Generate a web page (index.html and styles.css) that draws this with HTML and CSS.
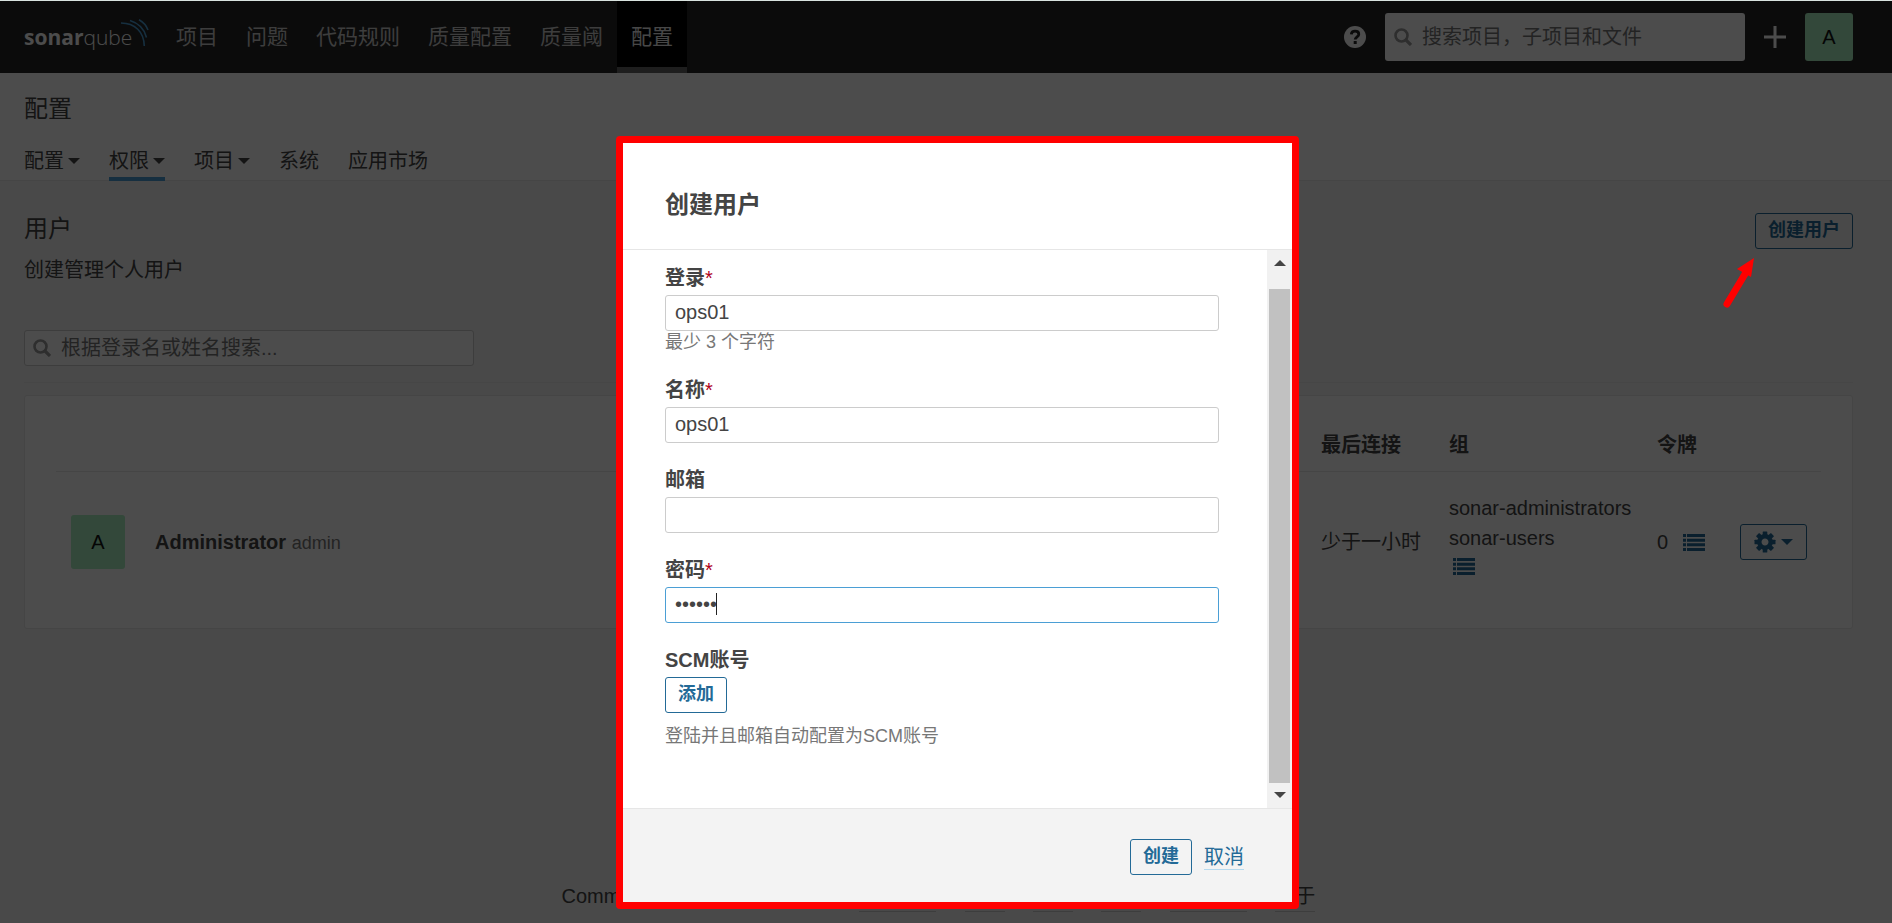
FILE: index.html
```html
<!DOCTYPE html>
<html lang="zh-CN">
<head>
<meta charset="utf-8">
<title>SonarQube - 用户</title>
<link rel="stylesheet" href="styles.css">
</head>
<body>
<div class="page">
  <header class="navbar">
    <a class="logo" href="#" aria-label="sonarqube">
      <span class="logo-bold">sonar</span><span class="logo-light">qube</span>
      <svg class="logo-waves" width="29" height="28" viewBox="0 0 29 28" fill="none" stroke="#4b9fd5" stroke-width="1.6"><path d="M1 4C15 4 24 13 24.300 27"/><path d="M10 1.500C18 4 24.500 10 26.500 18.500"/><path d="M19 .800C23 3 26.500 7 28 11"/></svg>
    </a>
    <nav class="main-nav">
      <a href="#">项目</a>
      <a href="#">问题</a>
      <a href="#">代码规则</a>
      <a href="#">质量配置</a>
      <a href="#">质量阈</a>
      <a href="#" class="active">配置</a>
    </nav>
    <div class="nav-tools">
      <a href="#" class="help" aria-label="帮助">
        <svg width="22" height="22" viewBox="0 0 22 22"><circle cx="11" cy="11" r="11" fill="#fff"/><path d="M7.300 8.400C7.500 6.200 9 5.200 11.100 5.200C13.300 5.200 14.800 6.400 14.800 8.200C14.800 10.800 11.200 10.800 11.200 13.600" fill="none" stroke="#262626" stroke-width="2.800"/><rect x="9.700" y="15" width="3" height="3" fill="#262626"/></svg>
      </a>
      <label class="search search-global">
        <svg class="search-icon" width="18" height="18" viewBox="0 0 18 18" fill="none" stroke="#999" stroke-width="2.600"><circle cx="7.500" cy="7.500" r="6"/><path d="M12 12l5 5" stroke-width="3.200"/></svg>
        <input type="search" placeholder="搜索项目，子项目和文件" aria-label="搜索项目，子项目和文件">
      </label>
      <button class="plus" aria-label="新建">
        <svg width="22" height="22" viewBox="0 0 22 22" stroke="#fff" stroke-width="3"><path d="M11 0v22M0 11h22"/></svg>
      </button>
      <a href="#" class="avatar avatar-nav">A</a>
    </div>
  </header>

  <section class="context">
    <h1>配置</h1>
    <nav class="tabs">
      <a href="#">配置<i class="caret"></i></a>
      <a href="#" class="active">权限<i class="caret"></i></a>
      <a href="#">项目<i class="caret"></i></a>
      <a href="#">系统</a>
      <a href="#">应用市场</a>
    </nav>
  </section>

  <main class="content">
    <div class="page-head">
      <div>
        <h2>用户</h2>
        <p>创建管理个人用户</p>
      </div>
      <button class="btn">创建用户</button>
    </div>
    <div class="filter">
      <label class="search search-users">
        <svg class="search-icon" width="18" height="18" viewBox="0 0 18 18" fill="none" stroke="#999" stroke-width="2.600"><circle cx="7.500" cy="7.500" r="6"/><path d="M12 12l5 5" stroke-width="3.200"/></svg>
        <input type="search" placeholder="根据登录名或姓名搜索..." aria-label="根据登录名或姓名搜索">
      </label>
    </div>
    <div class="panel">
      <table class="users">
        <thead>
          <tr><th class="c-avatar"></th><th></th><th class="c-last">最后连接</th><th class="c-groups">组</th><th class="c-tokens">令牌</th><th class="c-actions"></th></tr>
        </thead>
        <tbody>
          <tr>
            <td><span class="avatar avatar-user">A</span></td>
            <td><strong>Administrator</strong> <span class="note">admin</span></td>
            <td>少于一小时</td>
            <td>
              <ul class="groups">
                <li>sonar-administrators</li>
                <li>sonar-users</li>
                <li><button class="icon-btn" aria-label="更新组"><svg width="22" height="17" viewBox="0 0 22 17" fill="#236a97"><path d="M0 0h3v3H0zM4 0h18v3H4zM0 4.700h3v3H0zM4 4.700h18v3H4zM0 9.300h3v3H0zM4 9.300h18v3H4zM0 14h3v3H0zM4 14h18v3H4z"/></svg></button></li>
              </ul>
            </td>
            <td>
              <span class="tokens">0 <button class="icon-btn" aria-label="更新令牌"><svg width="22" height="17" viewBox="0 0 22 17" fill="#236a97"><path d="M0 0h3v3H0zM4 0h18v3H4zM0 4.700h3v3H0zM4 4.700h18v3H4zM0 9.300h3v3H0zM4 9.300h18v3H4zM0 14h3v3H0zM4 14h18v3H4z"/></svg></button></span>
            </td>
            <td>
              <button class="btn btn-gear" aria-label="操作">
                <svg width="22" height="22" viewBox="-11 -11 22 22" fill="#236a97"><circle r="5.700" fill="none" stroke="#236a97" stroke-width="4.400"/><g id="teeth"><rect x="-2.300" y="-10.500" width="4.600" height="4" rx=".6"/><rect x="-2.300" y="6.500" width="4.600" height="4" rx=".6"/><rect x="-10.500" y="-2.300" width="4" height="4.600" rx=".6"/><rect x="6.500" y="-2.300" width="4" height="4.600" rx=".6"/></g><use href="#teeth" transform="rotate(45)"/></svg>
                <i class="caret"></i>
              </button>
            </td>
          </tr>
        </tbody>
      </table>
    </div>
  </main>

  <footer class="footer">
    <span>Community Edition</span><span>-</span><span>版本 8.9</span><span>-</span><a href="#">LGPL v3</a><span>-</span><a href="#">社区</a><span>-</span><a href="#">文档</a><span>-</span><a href="#">插件</a><span>-</span><a href="#">Web API</a><span>-</span><a href="#">关于</a>
  </footer>
</div>

<div class="overlay">
  <form class="modal" role="dialog" aria-labelledby="modal-title">
    <header class="modal-head"><h2 id="modal-title">创建用户</h2></header>
    <div class="modal-scroll">
      <div class="modal-body">
        <div class="field">
          <label for="login">登录<em>*</em></label>
          <input id="login" type="text" value="ops01">
          <p class="hint">最少 3 个字符</p>
        </div>
        <div class="field">
          <label for="name">名称<em>*</em></label>
          <input id="name" type="text" value="ops01">
        </div>
        <div class="field">
          <label for="email">邮箱</label>
          <input id="email" type="email">
        </div>
        <div class="field field-password">
          <label for="password">密码<em>*</em></label>
          <input id="password" class="focused" type="password" value="ops123">
          <i class="text-cursor"></i>
        </div>
        <div class="field">
          <label for="scm">SCM账号</label>
          <button id="scm" type="button" class="btn">添加</button>
          <p class="hint hint-spaced">登陆并且邮箱自动配置为SCM账号</p>
        </div>
      </div>
      <div class="scrollbar" aria-hidden="true">
        <i class="scroll-up"></i>
        <i class="scroll-thumb"></i>
        <i class="scroll-down"></i>
      </div>
    </div>
    <footer class="modal-foot">
      <button type="button" class="btn">创建</button>
      <a href="#">取消</a>
    </footer>
  </form>
</div>
<svg class="pointer" width="36" height="54" viewBox="0 0 36 54"><path d="M7 48L25 18" stroke="#f00" stroke-width="7" stroke-linecap="round"/><path d="M34 2L17 13L31 21Z" fill="#f00"/></svg>
</body>
</html>
```
FILE: styles.css
```css
* { box-sizing: border-box; }

body {
  margin: 0;
  border-top: 1px solid #d9e3df;
  background: #f3f3f3;
  color: #444;
  font: 20px/30px "Liberation Sans", "Noto Sans CJK SC", sans-serif;
}

h1, h2, p, ul { margin: 0; padding: 0; font-weight: 400; }
a { color: inherit; text-decoration: none; }
button, input { font: inherit; color: inherit; }
ul { list-style: none; }

.page { display: flex; flex-direction: column; min-height: calc(100vh - 1px); }

/* Top navigation */
.navbar {
  display: flex;
  height: 72px;
  padding: 0 39px 0 24px;
  background: #262626;
}
.logo {
  display: flex;
  align-items: center;
  position: relative;
  width: 138px;
  color: #fff;
  font: 21px/30px "Open Sans", sans-serif;
}
.logo-bold { font-weight: 700; }
.logo-light { font-weight: 300; }
.logo-waves { position: absolute; left: 96px; top: 18px; }
.main-nav { display: flex; }
.main-nav a {
  padding: 21px 14px 15px;
  border-bottom: 6px solid transparent;
  color: #ccc;
  font-size: 21px;
}
.main-nav .active { background: #000; border-color: #666; color: #eee; }
.nav-tools { display: flex; align-items: center; margin-left: auto; }
.help { display: flex; margin-right: 19px; }
.plus { display: flex; margin: 0 19px; padding: 0; border: 0; background: none; }

.search {
  display: flex;
  align-items: center;
  gap: 10px;
  padding: 0 9px;
  background: #fff;
  border-radius: 3px;
}
.search-icon { flex: none; }
.search input {
  flex: 1;
  min-width: 0;
  padding: 0;
  border: 0;
  outline: 0;
  background: none;
}
.search input::placeholder { color: #777; opacity: 1; }
.search-global { width: 360px; height: 48px; }
.search-users { width: 450px; height: 36px; padding: 0 8px; border: 1px solid #ccc; }

.avatar {
  display: flex;
  align-items: center;
  justify-content: center;
  background: #aaf0c1;
  border-radius: 3px;
  color: #111;
}
.avatar-nav { width: 48px; height: 48px; }
.avatar-user { width: 54px; height: 54px; }

.caret {
  display: inline-block;
  border: 6px solid transparent;
  border-top-color: currentColor;
  border-bottom: 0;
}

/* Section header with tabs */
.context {
  padding: 21px 24px 0;
  background: #fff;
  border-bottom: 1px solid #e6e6e6;
}
.context h1, .content h2 { font-size: 24px; }
.tabs { display: flex; gap: 29px; margin-top: 22px; }
.tabs a {
  display: flex;
  align-items: center;
  gap: 4px;
  margin-bottom: -1px;
  padding-bottom: 1px;
  border-bottom: 4px solid transparent;
}
.tabs .active { border-color: #4b9fd5; }

/* Users page */
.content { flex: 1; padding: 32px 39px 0 24px; }
.page-head { display: flex; justify-content: space-between; align-items: flex-start; }
.page-head h2 { margin-top: 1px; }
.page-head p { margin-top: 11px; }
.filter { margin-top: 45px; padding-bottom: 16px; border-bottom: 1px solid #ececec; }

.btn {
  height: 36px;
  padding: 0 12px 2px;
  border: 1px solid #236a97;
  border-radius: 3px;
  background: transparent;
  color: #236a97;
  font-size: 18px;
  font-weight: 700;
  line-height: 30px;
}
.icon-btn { display: inline-flex; padding: 0; border: 0; background: none; }

.panel {
  margin-top: 12px;
  padding: 15px 31px;
  background: #fff;
  border: 1px solid #e6e6e6;
  border-radius: 3px;
}
.users { width: 100%; border-collapse: collapse; table-layout: fixed; }
.users th {
  padding: 19px 0 11px;
  border-bottom: 1px solid #e6e6e6;
  text-align: left;
}
.users td { height: 141px; padding: 0; vertical-align: middle; }
.users td:first-child { padding-left: 15px; }
.c-avatar { width: 99px; }
.c-last { width: 128px; }
.c-groups { width: 208px; }
.c-tokens { width: 83px; }
.c-actions { width: 81px; }
.users th, .users strong { font-weight: 700; }
.note { color: #777; font-size: 18px; }
.groups { padding-bottom: 8px; }
.groups .icon-btn { margin: 4px 4px 0; }
.tokens { display: flex; align-items: center; gap: 15px; }
.btn-gear { display: flex; align-items: center; gap: 5px; padding: 0 13px; }

.footer {
  display: flex;
  justify-content: space-between;
  align-self: center;
  width: 769px;
  max-width: 100%;
  margin-bottom: 11px;
  padding-right: 15px;
}
.footer a { border-bottom: 1px solid #ccc; }

/* Dialog */
.overlay {
  position: fixed;
  inset: 1px 0 0;
  display: flex;
  justify-content: center;
  align-items: flex-start;
  padding: 135px 0 0 23px;
  background: rgba(0, 0, 0, .7);
}
.modal {
  width: 683px;
  max-width: 100%;
  border: 7px solid #f00;
  border-radius: 4px;
  background: #fff;
}
.modal-head { padding: 47px 42px 29px; border-bottom: 1px solid #e6e6e6; }
.modal-head h2 { font-size: 24px; font-weight: 700; }
.modal-scroll { display: flex; }
.modal-body { flex: 1; padding: 13px 48px 39px 42px; }
.field { margin-bottom: 22px; }
.field label { display: block; margin-bottom: 2px; font-weight: 700; }
.field em { color: #b00018; font-style: normal; font-weight: 400; }
.field input {
  display: block;
  width: 100%;
  height: 36px;
  padding: 0 9px 2px;
  border: 1px solid #ccc;
  border-radius: 3px;
  outline: 0;
  background: #fff;
}
.field input.focused { border-color: #4b9fd5; }
.field .btn { display: block; }
.field-password { position: relative; }
.text-cursor {
  position: absolute;
  left: 51px;
  bottom: 8px;
  width: 1px;
  height: 22px;
  background: #222;
}
.hint { color: #777; font-size: 18px; line-height: 22px; }
.hint-spaced { margin-top: 12px; }

.scrollbar {
  display: flex;
  flex-direction: column;
  align-items: center;
  width: 25px;
  padding: 10px 2px;
  background: #f1f1f1;
}
.scroll-up, .scroll-down { border: 6px solid transparent; }
.scroll-up { border-top: 0; border-bottom-color: #444; margin-bottom: 23px; }
.scroll-down { border-bottom: 0; border-top-color: #444; margin-top: 9px; }
.scroll-thumb { flex: 1; width: 100%; background: #c1c1c1; }

.modal-foot {
  display: flex;
  justify-content: flex-end;
  align-items: center;
  gap: 12px;
  padding: 30px 48px 27px;
  border-top: 1px solid #e6e6e6;
  background: #f3f3f3;
}
.modal-foot a { color: #236a97; line-height: 24px; border-bottom: 1px solid #b5d9ee; }

/* Callout arrow over the page */
.pointer { position: absolute; right: 136px; top: 256px; }
```
